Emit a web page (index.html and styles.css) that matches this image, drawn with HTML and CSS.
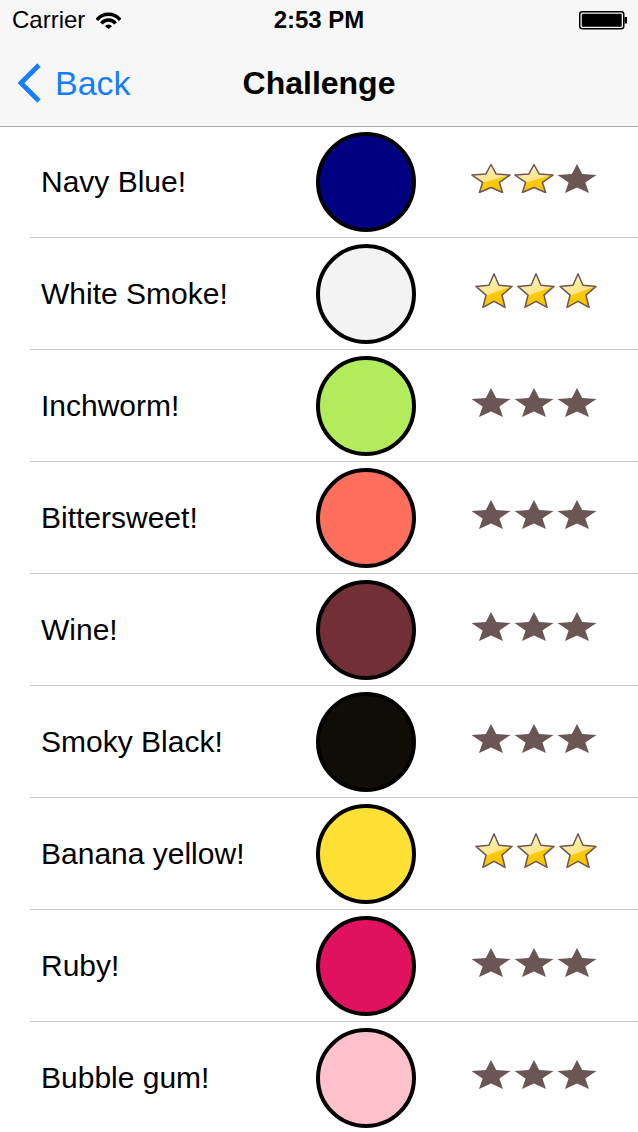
FILE: index.html
```html
<!DOCTYPE html>
<html lang="en">
<head>
<meta charset="utf-8">
<title>Challenge</title>
<link rel="stylesheet" href="styles.css">
</head>
<body>
<svg class="sprite" width="0" height="0" aria-hidden="true">
  <defs>
    <linearGradient id="gold" gradientUnits="userSpaceOnUse" x1="16" y1="2" x2="24" y2="29">
      <stop offset="0" stop-color="#fff2b8"/>
      <stop offset="0.54" stop-color="#fee58a"/>
      <stop offset="0.55" stop-color="#fdcb08"/>
      <stop offset="1" stop-color="#f8c200"/>
    </linearGradient>
    <symbol id="star-gold" viewBox="0 0 40 30" preserveAspectRatio="none">
      <polygon points="20,1 25.2,10.6 39,11.6 28.4,18.9 31.6,29 20,24 8.4,29 11.6,18.9 1,11.6 14.8,10.6" fill="url(#gold)" stroke="#6b5656" stroke-width="1.5" stroke-linejoin="round" vector-effect="non-scaling-stroke"/>
    </symbol>
    <symbol id="star-gray" viewBox="0 0 40 30" preserveAspectRatio="none">
      <polygon points="20,0.5 25.2,10.6 39.5,11.5 28.4,18.9 32,29.5 20,24 8,29.5 11.6,18.9 0.5,11.5 14.8,10.6" fill="#6b5656"/>
    </symbol>
  </defs>
</svg>

<div class="screen">
  <header class="bar">
    <div class="status">
      <div class="status-left">
        <span class="carrier">Carrier</span>
        <svg class="wifi" width="25" height="18" viewBox="0 0 25 18">
          <path d="M0.84 8.88 A14.8 14.8 0 0 1 24.16 8.88" fill="none" stroke="#000" stroke-width="3.4"/>
          <path d="M5.41 12.46 A9 9 0 0 1 19.59 12.46" fill="none" stroke="#000" stroke-width="3.4"/>
          <path d="M12.5 18 L8.95 15.23 A4.5 4.5 0 0 1 16.05 15.23 Z" fill="#000"/>
        </svg>
      </div>
      <div class="time">2:53 PM</div>
      <div class="status-right">
        <svg class="battery" width="49" height="19" viewBox="0 0 49 19">
          <rect x="0.75" y="0.75" width="44" height="17" rx="2.5" fill="none" stroke="#000" stroke-width="1.5"/>
          <rect x="2.8" y="2.8" width="39.9" height="12.9" rx="1" fill="#000"/>
          <rect x="45.5" y="6" width="2.5" height="6.5" fill="#000"/>
        </svg>
      </div>
    </div>
    <nav class="nav">
      <a class="back" href="#">
        <svg class="chevron" width="24" height="40" viewBox="0 0 24 40">
          <path d="M22 2 L4 20 L22 38" fill="none" stroke="#157efb" stroke-width="4.8"/>
        </svg>
        <span>Back</span>
      </a>
      <h1 class="title">Challenge</h1>
      <span class="nav-spacer"></span>
    </nav>
  </header>

  <ul class="list">
    <li class="row">
      <span class="name">Navy Blue!</span>
      <span class="swatch swatch-navy"></span>
      <svg class="stars" width="130" height="46" viewBox="0 0 130 46">
        <use href="#star-gold" x="0" y="4.5" width="40" height="30"/>
        <use href="#star-gold" x="43" y="4.5" width="40" height="30"/>
        <use href="#star-gray" x="86" y="4.5" width="40" height="30"/>
      </svg>
    </li>
    <li class="row">
      <span class="name">White Smoke!</span>
      <span class="swatch swatch-smoke"></span>
      <svg class="stars" width="130" height="46" viewBox="0 0 130 46">
        <use href="#star-gold" x="4" y="1.5" width="38" height="36"/>
        <use href="#star-gold" x="46" y="1.5" width="38" height="36"/>
        <use href="#star-gold" x="88" y="1.5" width="38" height="36"/>
      </svg>
    </li>
    <li class="row">
      <span class="name">Inchworm!</span>
      <span class="swatch swatch-inchworm"></span>
      <svg class="stars" width="130" height="46" viewBox="0 0 130 46">
        <use href="#star-gray" x="0" y="4.5" width="40" height="30"/>
        <use href="#star-gray" x="43" y="4.5" width="40" height="30"/>
        <use href="#star-gray" x="86" y="4.5" width="40" height="30"/>
      </svg>
    </li>
    <li class="row">
      <span class="name">Bittersweet!</span>
      <span class="swatch swatch-bittersweet"></span>
      <svg class="stars" width="130" height="46" viewBox="0 0 130 46">
        <use href="#star-gray" x="0" y="4.5" width="40" height="30"/>
        <use href="#star-gray" x="43" y="4.5" width="40" height="30"/>
        <use href="#star-gray" x="86" y="4.5" width="40" height="30"/>
      </svg>
    </li>
    <li class="row">
      <span class="name">Wine!</span>
      <span class="swatch swatch-wine"></span>
      <svg class="stars" width="130" height="46" viewBox="0 0 130 46">
        <use href="#star-gray" x="0" y="4.5" width="40" height="30"/>
        <use href="#star-gray" x="43" y="4.5" width="40" height="30"/>
        <use href="#star-gray" x="86" y="4.5" width="40" height="30"/>
      </svg>
    </li>
    <li class="row">
      <span class="name">Smoky Black!</span>
      <span class="swatch swatch-smoky"></span>
      <svg class="stars" width="130" height="46" viewBox="0 0 130 46">
        <use href="#star-gray" x="0" y="4.5" width="40" height="30"/>
        <use href="#star-gray" x="43" y="4.5" width="40" height="30"/>
        <use href="#star-gray" x="86" y="4.5" width="40" height="30"/>
      </svg>
    </li>
    <li class="row">
      <span class="name">Banana yellow!</span>
      <span class="swatch swatch-banana"></span>
      <svg class="stars" width="130" height="46" viewBox="0 0 130 46">
        <use href="#star-gold" x="4" y="1.5" width="38" height="36"/>
        <use href="#star-gold" x="46" y="1.5" width="38" height="36"/>
        <use href="#star-gold" x="88" y="1.5" width="38" height="36"/>
      </svg>
    </li>
    <li class="row">
      <span class="name">Ruby!</span>
      <span class="swatch swatch-ruby"></span>
      <svg class="stars" width="130" height="46" viewBox="0 0 130 46">
        <use href="#star-gray" x="0" y="4.5" width="40" height="30"/>
        <use href="#star-gray" x="43" y="4.5" width="40" height="30"/>
        <use href="#star-gray" x="86" y="4.5" width="40" height="30"/>
      </svg>
    </li>
    <li class="row">
      <span class="name">Bubble gum!</span>
      <span class="swatch swatch-bubblegum"></span>
      <svg class="stars" width="130" height="46" viewBox="0 0 130 46">
        <use href="#star-gray" x="0" y="4.5" width="40" height="30"/>
        <use href="#star-gray" x="43" y="4.5" width="40" height="30"/>
        <use href="#star-gray" x="86" y="4.5" width="40" height="30"/>
      </svg>
    </li>
  </ul>
</div>
</body>
</html>
```

FILE: styles.css
```css
* {
  box-sizing: border-box;
}

html,
body {
  margin: 0;
  padding: 0;
  background: #ffffff;
  font-family: "Liberation Sans", Arial, Helvetica, sans-serif;
  color: #000000;
}

.sprite {
  position: absolute;
  width: 0;
  height: 0;
  overflow: hidden;
}

.screen {
  width: 638px;
  height: 1132px;
  overflow: hidden;
}

.bar {
  height: 126px;
  background: #f7f7f7;
  box-shadow: 0 1px 0 #a9a9ad;
}

.status {
  height: 40px;
  display: grid;
  grid-template-columns: 1fr auto 1fr;
  align-items: center;
}

.status-left {
  display: flex;
  align-items: center;
  gap: 11px;
  padding-left: 12px;
}

.carrier {
  font-size: 24px;
  line-height: 1;
}

.wifi {
  display: block;
  margin-top: -1px;
}

.time {
  font-size: 24px;
  font-weight: bold;
  line-height: 1;
}

.status-right {
  display: flex;
  justify-content: flex-end;
  padding-right: 10px;
}

.battery {
  display: block;
}

.nav {
  height: 86px;
  display: grid;
  grid-template-columns: 1fr auto 1fr;
  align-items: center;
}

.back {
  display: flex;
  align-items: center;
  gap: 14px;
  padding-left: 17px;
  color: #157efb;
  text-decoration: none;
  font-size: 34px;
}

.chevron {
  display: block;
}

.title {
  margin: 0;
  font-size: 32px;
  font-weight: bold;
  line-height: 1;
}

.list {
  list-style: none;
  margin: 0;
  padding: 0;
}

.row {
  margin-left: 30px;
  height: 112px;
  border-bottom: 1px solid #c8c7cc;
  padding-left: 11px;
  display: grid;
  grid-template-columns: 275px 100px auto;
  align-items: center;
}

.name {
  font-size: 30px;
  line-height: 1.15;
  white-space: nowrap;
  padding-top: 2px;
}

.swatch {
  display: block;
  width: 100px;
  height: 100px;
  border: 4px solid #000000;
  border-radius: 50%;
}

.swatch-navy { background: #000080; }
.swatch-smoke { background: #f3f3f3; }
.swatch-inchworm { background: #b2ec5d; }
.swatch-bittersweet { background: #fe6f5e; }
.swatch-wine { background: #722f37; }
.swatch-smoky { background: #100c08; }
.swatch-banana { background: #ffe135; }
.swatch-ruby { background: #e0115f; }
.swatch-bubblegum { background: #ffc1cc; }

.stars {
  display: block;
  margin-left: 55px;
}
```
